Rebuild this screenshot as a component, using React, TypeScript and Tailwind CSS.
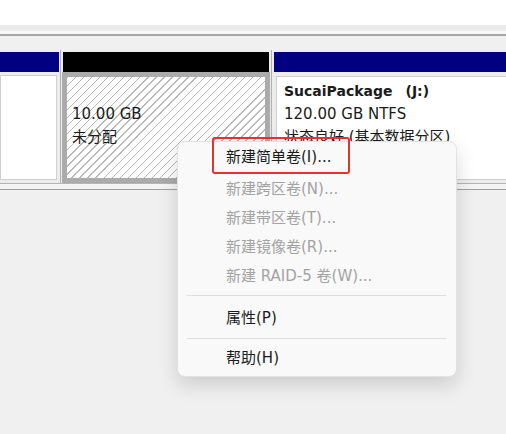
const font = { fontFamily: '"DejaVu Sans", "Noto Sans CJK SC", sans-serif' };

const enabledItem = "flex items-center h-[29px] pl-[48px] text-[15px] text-[#1b1b1b]";
const disabledItem = "flex items-center h-[29px] pl-[48px] text-[15px] text-[#a3a3a3]";

function Separator({ className }: { className: string }) {
  return <div className={"h-px ml-[9px] mr-[10px] bg-[#dedede] " + className} />;
}

function ContextMenu() {
  return (
    <div className="absolute left-[177px] top-[141px] w-[280px] rounded-[8px] border border-[#e2e2e2] bg-[#f9f9f9] pb-[3px] shadow-[0_8px_20px_rgba(0,0,0,0.15)]">
      <div className="flex items-center h-[30px] pl-[48px] text-[15px] text-[#1b1b1b]">新建简单卷(I)...</div>
      <div className={disabledItem + " mt-[3px]"}>新建跨区卷(N)...</div>
      <div className={disabledItem}>新建带区卷(T)...</div>
      <div className={disabledItem}>新建镜像卷(R)...</div>
      <div className={disabledItem}>新建 RAID-5 卷(W)...</div>
      <Separator className="mt-[4px] mb-[8px]" />
      <div className={enabledItem}>属性(P)</div>
      <Separator className="mt-[5px] mb-[5px]" />
      <div className={enabledItem}>帮助(H)</div>
    </div>
  );
}

export default function App() {
  return (
    <div className="relative w-[506px] h-[434px] overflow-hidden bg-[#f0f0f0]" style={font}>
      <div className="h-[25px] bg-white" />
      <div className="h-[6px] bg-[#ebebeb]" />
      <div className="h-[3px] bg-[#f8f8f8]" />
      <div className="h-[2px] bg-[#a6a6a6]" />
      <div className="h-[14px] bg-[#f0f0f0]" />

      {/* disk row */}
      <div className="flex h-[133px] bg-[#ececec]">
        <div className="w-[60px] flex flex-col pt-[2px]">
          <div className="h-[20px] bg-[#000080] mr-[1px]" />
          <div className="flex-1 pt-[3px] pr-[3px] pb-[3px]">
            <div className="h-full border border-[#cfcfcf] bg-white" />
          </div>
        </div>
        <div className="w-px bg-[#b0b0b0]" />
        <div className="w-[210px] flex flex-col pt-[2px]">
          <div className="h-[20px] bg-black mx-[2px]" />
          <div className="flex-1 mx-[1px] border-[5px] border-[#ababab] bg-[repeating-linear-gradient(135deg,#b8b8b8_0_1px,#ffffff_1px_5.7px)] pl-[5px] pt-[3px] text-[15px] leading-[23px] text-[#1b1b1b]">
            <div className="h-[23px]" />
            <div>10.00 GB</div>
            <div>未分配</div>
          </div>
        </div>
        <div className="w-px bg-[#b0b0b0]" />
        <div className="flex-1 flex flex-col pt-[2px]">
          <div className="h-[20px] bg-[#000080] ml-[2px]" />
          <div className="flex-1 pl-[4px] pt-[4px] pb-[3px]">
            <div className="h-full border border-r-0 border-[#cfcfcf] bg-white pl-[7px] pt-[3px] text-[15px] leading-[23px] text-[#1b1b1b]">
              <div className="text-[14px] font-bold">
                SucaiPackage<span className="ml-[13px]">(J:)</span>
              </div>
              <div>120.00 GB NTFS</div>
              <div>状态良好 (基本数据分区)</div>
            </div>
          </div>
        </div>
      </div>

      <div className="h-px bg-[#b4b4b4]" />
      <div className="h-[5px] bg-[#f4f4f4]" />
      <div className="h-px bg-[#a0a0a0]" />

      <ContextMenu />

      {/* annotation */}
      <div className="absolute left-[212px] top-[137px] w-[138px] h-[37px] rounded-[3px] border-2 border-[#e5322d]" />
    </div>
  );
}
